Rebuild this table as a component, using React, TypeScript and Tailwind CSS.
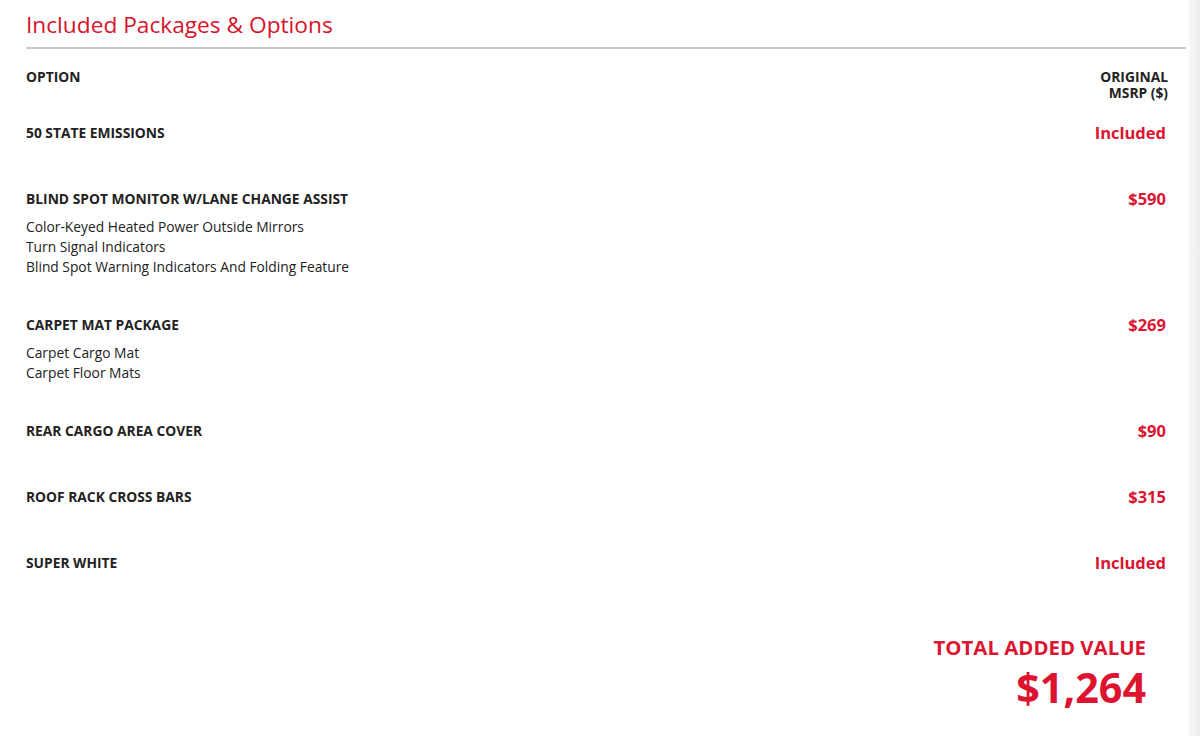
const options = [
  { name: '50 STATE EMISSIONS', price: 'Included', items: [] as string[] },
  {
    name: 'BLIND SPOT MONITOR W/LANE CHANGE ASSIST',
    price: '$590',
    items: [
      'Color-Keyed Heated Power Outside Mirrors',
      'Turn Signal Indicators',
      'Blind Spot Warning Indicators And Folding Feature',
    ],
  },
  { name: 'CARPET MAT PACKAGE', price: '$269', items: ['Carpet Cargo Mat', 'Carpet Floor Mats'] },
  { name: 'REAR CARGO AREA COVER', price: '$90', items: [] },
  { name: 'ROOF RACK CROSS BARS', price: '$315', items: [] },
  { name: 'SUPER WHITE', price: 'Included', items: [] },
]

const OptionRow = ({ name, price, items }: { name: string; price: string; items: string[] }) => (
  <div className="flex justify-between pb-[38px]">
    <div>
      <h3 className="text-[13.8px] leading-5 font-bold text-[#222]">{name}</h3>
      <ul className="mt-2">
        {items.map((item) => (
          <li key={item} className="text-[13.8px] leading-5 text-[#222]">{item}</li>
        ))}
      </ul>
    </div>
    <div className="pr-5 text-[16.5px] leading-5 font-bold text-[#dc1430]">{price}</div>
  </div>
)

export default function App() {
  return (
    <div className="flex min-h-[736px] bg-white font-['Open_Sans',sans-serif]">
      <div className="w-[1189px] pl-[26px] pr-[3px] pt-[9px]">
        <h2 className="text-[22.7px] leading-8 text-[#d6132a]">Included Packages &amp; Options</h2>
        <div className="mt-[6px] h-[2px] bg-[#cbcbcb]" />

        <div className="mt-5 flex justify-between pb-[22px]">
          <span className="text-[13.8px] leading-4 font-bold text-[#222]">OPTION</span>
          <span className="pr-[18px] text-right text-[13.8px] leading-4 font-bold text-[#222]">
            ORIGINAL
            <br />
            MSRP ($)
          </span>
        </div>

        {options.map((o) => (
          <OptionRow key={o.name} {...o} />
        ))}

        <div className="mt-[14px] flex flex-col items-end pr-10">
          <span className="text-[20.4px] leading-7 font-bold text-[#dc1430]">TOTAL ADDED VALUE</span>
          <span className="mt-[2px] text-[41.3px] leading-[48px] font-bold text-[#dc1430]">$1,264</span>
        </div>
      </div>
      <div className="w-[11px] bg-gradient-to-r from-[#f7f7f7] to-[#ececec]" />
    </div>
  )
}
